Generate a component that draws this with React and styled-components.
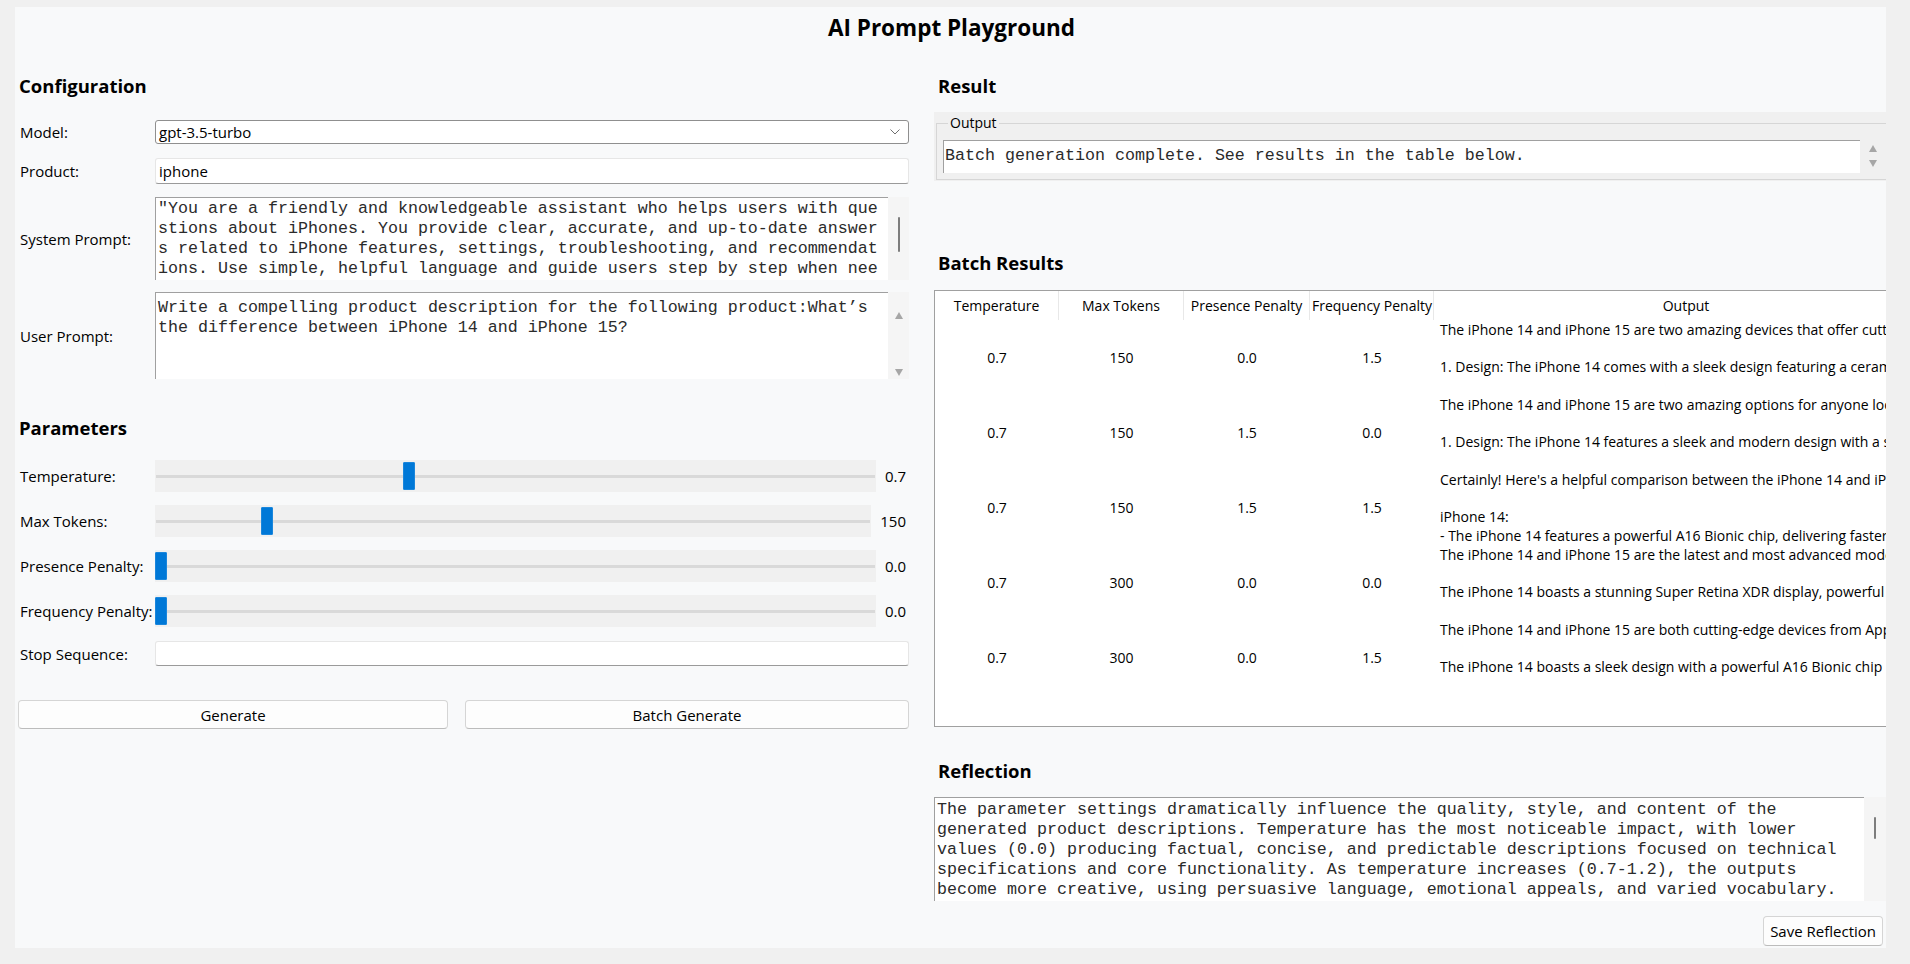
import React from "react";
import styled, { createGlobalStyle } from "styled-components";

const GlobalStyle = createGlobalStyle`
  html, body {
    margin: 0;
    padding: 0;
    background: #f0f0f0;
  }
  body {
    font-family: "Open Sans", "Noto Sans", sans-serif;
    color: #000;
  }
  * { box-sizing: border-box; }
`;

const Window = styled.div`
  width: 1910px;
  height: 964px;
  padding: 7px 24px 16px 15px;
  overflow: hidden;
`;

const Panel = styled.div`
  height: 941px;
  background: #f8f9fa;
  overflow: hidden;
  padding: 7px 0 0 2px;
  display: flex;
  flex-direction: column;
`;

const Title = styled.h1`
  margin: 0;
  height: 28px;
  line-height: 28px;
  font-size: 22.5px;
  font-weight: 700;
  text-align: center;
`;

const Columns = styled.div`
  margin-top: 32px;
  display: grid;
  grid-template-columns: 892px 952px;
  column-gap: 25px;
  align-items: start;
`;

const Column = styled.div`
  display: flex;
  flex-direction: column;
  min-width: 0;
`;

const Heading = styled.h2`
  margin: 0;
  margin-top: ${(p) => p.$mt || 0}px;
  height: 24px;
  line-height: 24px;
  font-size: 18.5px;
  font-weight: 700;
  padding-left: ${(p) => (p.$right ? 4 : 2)}px;
`;

const Row = styled.div`
  display: flex;
  align-items: center;
  margin-top: ${(p) => p.$mt}px;
  height: ${(p) => p.$h}px;
`;

const Label = styled.div`
  width: 138px;
  flex: none;
  padding-left: 3px;
  font-size: 15px;
  white-space: nowrap;
`;

const Combo = styled.div`
  flex: 1;
  height: 100%;
  background: #fff;
  border: 1px solid #8f8f8f;
  border-radius: 3px;
  display: flex;
  align-items: center;
  justify-content: space-between;
  padding: 0 8px 0 3px;
  font-size: 15px;
`;

const LineInput = styled.div`
  flex: 1;
  height: 100%;
  background: #fff;
  border: 1px solid #e6e6e6;
  border-bottom: 1px solid #9a9a9a;
  border-radius: 3px;
  display: flex;
  align-items: center;
  padding-left: 3px;
  font-size: 15px;
`;

const TextFrame = styled.div`
  flex: 1;
  height: 100%;
  display: flex;
  min-width: 0;
`;

const MonoBox = styled.div`
  flex: 1;
  height: 100%;
  background: #fff;
  border-top: 1px solid #a0a0a0;
  border-left: 1px solid #a0a0a0;
  padding: ${(p) => p.$pt}px 0 0 ${(p) => p.$pl || 2}px;
  font-family: "Liberation Mono", "Courier New", monospace;
  font-size: 16.67px;
  line-height: 20px;
  color: #2b2b2b;
  white-space: pre;
  overflow: hidden;
`;

const ScrollTrack = styled.div`
  width: ${(p) => p.$w}px;
  flex: none;
  height: 100%;
  background: ${(p) => p.$bg || "#f5f5f5"};
  display: flex;
  flex-direction: column;
  align-items: center;
  justify-content: ${(p) => (p.$arrows ? "space-between" : "flex-start")};
  padding: ${(p) => p.$pad || "0"};
`;

const Thumb = styled.div`
  width: 2px;
  border-radius: 1px;
  background: #7d7d7d;
  margin-top: ${(p) => p.$top}px;
  height: ${(p) => p.$h}px;
`;

const SliderBox = styled.div`
  flex: 1;
  height: 100%;
  background: #f0f0f0;
  position: relative;
  display: flex;
  align-items: center;
`;

const Groove = styled.div`
  width: 100%;
  height: 3px;
  margin: 0 1px;
  background: #d9d9d9;
`;

const Handle = styled.div`
  position: absolute;
  top: 2px;
  bottom: 2px;
  width: 12px;
  left: calc((100% - 12px) * ${(p) => p.$pos});
  background: #0078d7;
  border: 1px solid #1a86dc;
  border-radius: 1px;
`;

const Value = styled.div`
  flex: none;
  margin-left: ${(p) => p.$gap}px;
  padding-right: 3px;
  font-size: 15px;
`;

const ButtonRow = styled.div`
  margin-top: 34px;
  display: grid;
  grid-template-columns: 430px 1fr;
  column-gap: 17px;
  padding-left: 1px;
`;

const Button = styled.button`
  height: ${(p) => p.$h || 29}px;
  background: #fdfdfd;
  border: 1px solid #d5d5d5;
  border-bottom-color: #bcbcbc;
  border-radius: 4px;
  font-family: "Open Sans", "Noto Sans", sans-serif;
  font-size: 15px;
  color: #000;
  padding: 0 6px;
`;

const GroupWrap = styled.div`
  margin-top: 14px;
  height: 69px;
  background: #f0f0f0;
  padding: 2px 0 0 2px;
  overflow: hidden;
`;

const GroupBox = styled.fieldset`
  margin: 0;
  border: 1px solid #d6d6d6;
  border-right: none;
  padding: 8px 0 6px 6px;
  min-width: 0;
`;

const Legend = styled.legend`
  font-size: 14px;
  line-height: 18px;
  padding: 0 2px;
  margin-left: 5px;
`;

const OutputLine = styled.div`
  display: flex;
  height: 33px;
`;

const Table = styled.div`
  margin-top: 15px;
  height: 437px;
  background: #fff;
  border: 1px solid #a0a0a0;
  border-right: none;
  overflow: hidden;
`;

const TableGrid = styled.div`
  display: grid;
  grid-template-columns: 124px 125px 126px 124px 504px;
  grid-auto-rows: 75px;
  grid-template-rows: 29px;
  font-size: 14px;
`;

const HeadCell = styled.div`
  line-height: 29px;
  text-align: center;
  white-space: nowrap;
  overflow: hidden;
  border-right: ${(p) => (p.$last ? "none" : "1px solid #e8e8e8")};
  padding: 0 2px;
`;

const Cell = styled.div`
  display: flex;
  align-items: center;
  justify-content: center;
`;

const OutCell = styled.div`
  line-height: 18.5px;
  padding: 1px 6px 0;
  white-space: pre;
  overflow: hidden;
`;

const ReflectionRow = styled.div`
  margin-top: 14px;
  height: 104px;
  display: flex;
`;

const SaveRow = styled.div`
  margin-top: 15px;
  display: flex;
  justify-content: flex-end;
  padding-right: 3px;
`;

const Chevron = () => (
  <svg width="10" height="6" viewBox="0 0 10 6">
    <polyline points="0.5,0.5 5,5 9.5,0.5" fill="none" stroke="#6f6f6f" strokeWidth="1" />
  </svg>
);

const Arrow = ({ down }) => (
  <svg width="8" height="7" viewBox="0 0 8 7">
    <polygon points={down ? "0,0 8,0 4,7" : "4,0 8,7 0,7"} fill="#a6a6a6" />
  </svg>
);

const systemPrompt = [
  '"You are a friendly and knowledgeable assistant who helps users with que',
  "stions about iPhones. You provide clear, accurate, and up-to-date answer",
  "s related to iPhone features, settings, troubleshooting, and recommendat",
  "ions. Use simple, helpful language and guide users step by step when nee",
  "ded.",
].join("\n");

const userPrompt = [
  "Write a compelling product description for the following product:What\u2019s",
  "the difference between iPhone 14 and iPhone 15?",
].join("\n");

const reflection = [
  "The parameter settings dramatically influence the quality, style, and content of the",
  "generated product descriptions. Temperature has the most noticeable impact, with lower",
  "values (0.0) producing factual, concise, and predictable descriptions focused on technical",
  "specifications and core functionality. As temperature increases (0.7-1.2), the outputs",
  "become more creative, using persuasive language, emotional appeals, and varied vocabulary.",
].join("\n");

const sliders = [
  { label: "Temperature:", pos: 0.35, value: "0.7", gap: 9, mt: 20 },
  { label: "Max Tokens:", pos: 0.15, value: "150", gap: 9, mt: 13 },
  { label: "Presence Penalty:", pos: 0, value: "0.0", gap: 9, mt: 13 },
  { label: "Frequency Penalty:", pos: 0, value: "0.0", gap: 9, mt: 13 },
];

const results = [
  {
    t: "0.7", m: "150", p: "0.0", f: "1.5",
    out: [
      "The iPhone 14 and iPhone 15 are two amazing devices that offer cutting-edge features and performance.",
      "",
      "1. Design: The iPhone 14 comes with a sleek design featuring a ceramic shield front cover.",
    ],
  },
  {
    t: "0.7", m: "150", p: "1.5", f: "0.0",
    out: [
      "The iPhone 14 and iPhone 15 are two amazing options for anyone looking for a new smartphone.",
      "",
      "1. Design: The iPhone 14 features a sleek and modern design with a sturdy aluminum frame.",
    ],
  },
  {
    t: "0.7", m: "150", p: "1.5", f: "1.5",
    out: [
      "Certainly! Here's a helpful comparison between the iPhone 14 and iPhone 15:",
      "",
      "iPhone 14:",
      "- The iPhone 14 features a powerful A16 Bionic chip, delivering faster performance.",
    ],
  },
  {
    t: "0.7", m: "300", p: "0.0", f: "0.0",
    out: [
      "The iPhone 14 and iPhone 15 are the latest and most advanced models from Apple.",
      "",
      "The iPhone 14 boasts a stunning Super Retina XDR display, powerful performance and more.",
    ],
  },
  {
    t: "0.7", m: "300", p: "0.0", f: "1.5",
    out: [
      "The iPhone 14 and iPhone 15 are both cutting-edge devices from Apple with great features.",
      "",
      "The iPhone 14 boasts a sleek design with a powerful A16 Bionic chip and a great camera.",
    ],
  },
];

const headers = ["Temperature", "Max Tokens", "Presence Penalty", "Frequency Penalty", "Output"];

export default function App() {
  return (
    <Window>
      <GlobalStyle />
      <Panel>
        <Title>AI Prompt Playground</Title>
        <Columns>
          <Column>
            <Heading>Configuration</Heading>
            <Row $mt={22} $h={24}>
              <Label>Model:</Label>
              <Combo>
                <span>gpt-3.5-turbo</span>
                <Chevron />
              </Combo>
            </Row>
            <Row $mt={14} $h={26}>
              <Label>Product:</Label>
              <LineInput>iphone</LineInput>
            </Row>
            <Row $mt={13} $h={83}>
              <Label>System Prompt:</Label>
              <TextFrame>
                <MonoBox $pt={1} $pl={2}>{systemPrompt}</MonoBox>
                <ScrollTrack $w={21}>
                  <Thumb $top={20} $h={35} />
                </ScrollTrack>
              </TextFrame>
            </Row>
            <Row $mt={12} $h={87}>
              <Label>User Prompt:</Label>
              <TextFrame>
                <MonoBox $pt={5} $pl={2}>{userPrompt}</MonoBox>
                <ScrollTrack $w={21} $arrows $pad="20px 0 3px">
                  <Arrow />
                  <Arrow down />
                </ScrollTrack>
              </TextFrame>
            </Row>

            <Heading $mt={37}>Parameters</Heading>
            {sliders.map((s) => (
              <Row key={s.label} $mt={s.mt} $h={32}>
                <Label>{s.label}</Label>
                <SliderBox>
                  <Groove />
                  <Handle $pos={s.pos} />
                </SliderBox>
                <Value $gap={s.gap}>{s.value}</Value>
              </Row>
            ))}
            <Row $mt={14} $h={25}>
              <Label>Stop Sequence:</Label>
              <LineInput />
            </Row>
            <ButtonRow>
              <Button>Generate</Button>
              <Button>Batch Generate</Button>
            </ButtonRow>
          </Column>

          <Column>
            <Heading $right>Result</Heading>
            <GroupWrap>
              <GroupBox>
                <Legend>Output</Legend>
                <OutputLine>
                  <MonoBox $pt={5} $pl={1}>Batch generation complete. See results in the table below.</MonoBox>
                  <ScrollTrack $w={26} $bg="#f0f0f0" $arrows $pad="5px 0 6px">
                    <Arrow />
                    <Arrow down />
                  </ScrollTrack>
                </OutputLine>
              </GroupBox>
            </GroupWrap>

            <Heading $right $mt={70}>Batch Results</Heading>
            <Table>
              <TableGrid>
                {headers.map((h, i) => (
                  <HeadCell key={h} $last={i === headers.length - 1}>{h}</HeadCell>
                ))}
                {results.map((r, i) => (
                  <React.Fragment key={i}>
                    <Cell>{r.t}</Cell>
                    <Cell>{r.m}</Cell>
                    <Cell>{r.p}</Cell>
                    <Cell>{r.f}</Cell>
                    <OutCell>{r.out.join("\n")}</OutCell>
                  </React.Fragment>
                ))}
              </TableGrid>
            </Table>

            <Heading $right $mt={32}>Reflection</Heading>
            <ReflectionRow>
              <MonoBox $pt={2} $pl={2}>{reflection}</MonoBox>
              <ScrollTrack $w={22}>
                <Thumb $top={20} $h={22} />
              </ScrollTrack>
            </ReflectionRow>
            <SaveRow>
              <Button $h={30}>Save Reflection</Button>
            </SaveRow>
          </Column>
        </Columns>
      </Panel>
    </Window>
  );
}
